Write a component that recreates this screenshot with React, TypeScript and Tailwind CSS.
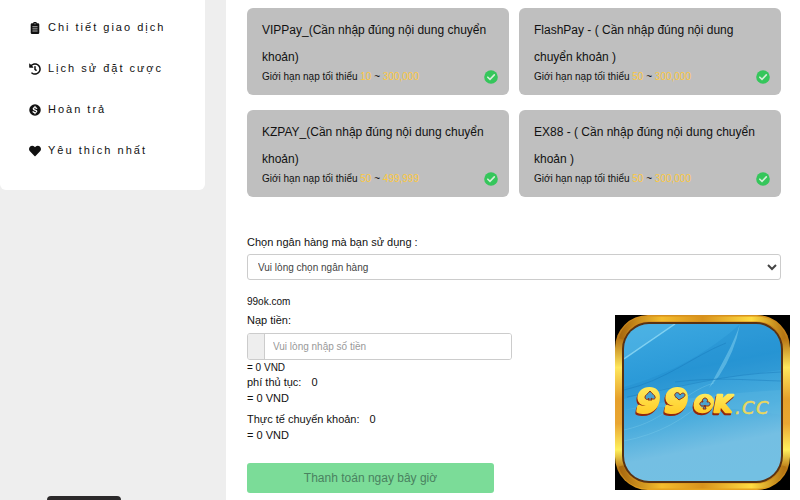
import React, { useState } from "react";
import { FaHistory, FaHeart } from "react-icons/fa";

const ClipboardIcon = () => (
  <svg viewBox="0 0 24 28" className="h-3 w-3" aria-hidden="true">
    <path
      fill="#111"
      d="M5 3h3a4 4 0 0 1 8 0h3a3 3 0 0 1 3 3v19a3 3 0 0 1-3 3H5a3 3 0 0 1-3-3V6a3 3 0 0 1 3-3Z"
    />
    <path stroke="#ddd" strokeWidth="1.8" d="M6 11h12M6 16h12M6 21h12" />
    <circle cx="12" cy="4" r="1.3" fill="#fff" />
  </svg>
);

const DollarIcon = () => (
  <svg viewBox="0 0 24 24" className="h-3 w-3" aria-hidden="true">
    <circle cx="12" cy="12" r="11.5" fill="#111" />
    <path
      fill="none"
      stroke="#fff"
      strokeWidth="2.4"
      strokeLinecap="round"
      d="M15.5 8.6c-1-1-2.2-1.4-3.7-1.4-2 0-3.4.9-3.4 2.4 0 3.5 7.2 1.6 7.2 5 0 1.5-1.5 2.4-3.6 2.4-1.5 0-2.9-.5-3.9-1.5M12 4.8v2.4M12 17v2.4"
    />
  </svg>
);

const CheckIcon = () => (
  <svg viewBox="0 0 14 14" className="h-3.5 w-3.5 shrink-0" aria-hidden="true">
    <circle cx="7" cy="7" r="6.8" fill="#35c65b" />
    <path
      d="m3.8 7.2 2.2 2.2 4.3-4.5"
      fill="none"
      stroke="#d4efd9"
      strokeWidth="1.6"
      strokeLinecap="round"
    />
  </svg>
);

const menu = [
  { label: "Chi tiết giao dịch", icon: <ClipboardIcon /> },
  { label: "Lịch sử đặt cược", icon: <FaHistory size={12} /> },
  { label: "Hoàn trả", icon: <DollarIcon /> },
  { label: "Yêu thích nhất", icon: <FaHeart size={12} /> },
];

const channels = [
  { name: "VIPPay_(Cần nhập đúng nội dung chuyển khoản)", min: "10", max: "300,000" },
  { name: "FlashPay - ( Cần nhập đúng nội dung chuyển khoản )", min: "50", max: "300,000" },
  { name: "KZPAY_(Cần nhập đúng nội dung chuyển khoản)", min: "50", max: "499,999" },
  { name: "EX88 - ( Cần nhập đúng nội dung chuyển khoản )", min: "50", max: "300,000" },
];

function Logo() {
  return (
    <svg viewBox="0 0 175 175" className="block h-[175px] w-[175px]" role="img" aria-label="99OK.cc">
      <defs>
        <linearGradient id="rim" x1="0" y1="0" x2="0" y2="1">
          <stop offset="0" stopColor="#d8911d" />
          <stop offset=".14" stopColor="#b97816" />
          <stop offset=".3" stopColor="#ffe75c" />
          <stop offset=".48" stopColor="#e6a02b" />
          <stop offset=".62" stopColor="#e9a632" />
          <stop offset=".77" stopColor="#fff05c" />
          <stop offset=".88" stopColor="#b77413" />
          <stop offset="1" stopColor="#e5a420" />
        </linearGradient>
        <linearGradient id="rimTop" x1="0" y1="0" x2="1" y2="0">
          <stop offset="0" stopColor="#a96a10" />
          <stop offset=".25" stopColor="#f4bd2d" />
          <stop offset=".5" stopColor="#d8921c" />
          <stop offset=".8" stopColor="#ffdc42" />
          <stop offset="1" stopColor="#b37413" />
        </linearGradient>
        <linearGradient id="sky" x1=".3" y1="0" x2=".5" y2="1">
          <stop offset="0" stopColor="#3aa6df" />
          <stop offset=".3" stopColor="#2b9ad8" />
          <stop offset=".6" stopColor="#4caddd" />
          <stop offset=".8" stopColor="#74bfe3" />
          <stop offset="1" stopColor="#73c0e3" />
        </linearGradient>
        <linearGradient id="gold" x1="0" y1="0" x2="0" y2="1">
          <stop offset="0" stopColor="#ffef64" />
          <stop offset="1" stopColor="#ffc61d" />
        </linearGradient>
        <clipPath id="face">
          <rect x="9" y="9" width="157" height="157" rx="25" />
        </clipPath>
      </defs>
      <rect width="175" height="175" fill="#000" />
      <rect width="175" height="175" rx="33" fill="url(#rim)" />
      <path
        d="M6 24Q12 4 34 4H141Q163 4 169 24M6 151Q12 171 34 171H141Q163 171 169 151"
        fill="none"
        stroke="url(#rimTop)"
        strokeWidth="5"
      />
      <rect x="7" y="7" width="161" height="161" rx="27" fill="#5a3212" />
      <rect x="9" y="9" width="157" height="157" rx="25" fill="url(#sky)" />
      <g clipPath="url(#face)" fill="none">
        <path d="M9 9H60L9 44Z" fill="#72c9ed" opacity=".3" />
        <path d="M9 44 60 9" stroke="#9be1f8" strokeWidth="1.5" opacity=".7" />
        <path d="M9 72C55 60 98 34 125 9H166V55C130 60 70 66 9 84Z" fill="#147fc2" opacity=".2" />
        <path d="M125 9C118 30 107 48 94 73L104 61Q120 37 125 9Z" fill="#9be1f8" opacity=".4" />
        <path
          d="M9 75C50 66 80 40 111 28M12 82C65 72 111 59 166 57M60 67C100 62 130 65 166 66"
          stroke="#1676b6"
          opacity=".4"
        />
        <path d="M9 115C55 105 65 78 99 68M9 126Q60 116 92 82" stroke="#89d4ef" opacity=".3" />
        <path d="M9 95Q80 86 166 100V75Q75 80 9 95Z" fill="#63bce6" opacity=".3" />
      </g>
      <g
        className="[filter:drop-shadow(-1px_2px_0_#92270d)]"
        fill="url(#gold)"
        stroke="url(#gold)"
        strokeLinejoin="round"
        fontFamily="'DejaVu Sans', sans-serif"
        fontWeight="bold"
        fontStyle="italic"
      >
        <text x="22 50" y="97" fontSize="32" strokeWidth="4">
          99
        </text>
        <text x="79 99" y="97" fontSize="23" strokeWidth="2.5">
          OK
        </text>
      </g>
      <g fill="#4aa3cf" stroke="#8c2c10">
        <path d="M35 76c-2 3-5 4-5 6 0 3 3 3 4 1l-1 2h4l-1-2c2 2 5 1 4-1 0-2-3-3-5-6Z" />
        <path d="M64 85c-3-3-5-4-4-6 1-2 4-2 5 1 2-3 5-2 5 0 0 2-3 3-6 5Z" />
        <path d="M88 87a2.5 2.5 0 1 1 4 0c4-1 4 4 1 4h-6c-3 0-3-5 1-4ZM90 90l1 4h-3Z" />
      </g>
      <text
        x="120 127 141"
        y="99"
        fill="#ead75e"
        stroke="#ead75e"
        strokeWidth=".5"
        fontFamily="'DejaVu Sans', sans-serif"
        fontStyle="italic"
        fontSize="18"
      >
        .CC
      </text>
    </svg>
  );
}

export default function App() {
  const [bank, setBank] = useState("");
  const [amount, setAmount] = useState("");

  return (
    <div className="relative flex min-h-screen overflow-hidden bg-white font-['Liberation_Sans',Arial,sans-serif] text-[11px] text-[#111]">
      <aside className="relative w-[226px] shrink-0 bg-[#eeeeee]">
        <nav className="mr-[21px] rounded-b-md bg-white pt-[7px] pb-[19px]">
          <ul>
            {menu.map((item) => (
              <li key={item.label}>
                <a href="#" className="flex h-[41px] items-center gap-[7px] pl-[29px] tracking-[2px]">
                  {item.icon}
                  {item.label}
                </a>
              </li>
            ))}
          </ul>
        </nav>
        <div className="absolute bottom-0 left-[47px] h-1 w-[74px] rounded-t bg-[#2b292a]" />
      </aside>

      <main className="min-w-0 flex-1 pt-2 pr-[19px] pl-[21px]">
        <div className="grid grid-cols-2 gap-x-2.5 gap-y-[15px]">
          {channels.map((c) => (
            <button
              type="button"
              key={c.name}
              className="flex flex-col rounded-md bg-[#bfbfbf] pt-[9px] pr-[11px] pb-3 pl-[15px] text-left"
            >
              <span className="text-xs leading-[27px]">{c.name}</span>
              <span className="flex h-3 w-full items-center justify-between text-[10px] leading-[14px]">
                <span>
                  Giới hạn nạp tối thiểu <span className="text-[#fcc93f]">{c.min}</span> ~{" "}
                  <span className="text-[#fcc93f]">{c.max}</span>
                </span>
                <CheckIcon />
              </span>
            </button>
          ))}
        </div>

        <form onSubmit={(e) => e.preventDefault()}>
          <label htmlFor="bank" className="mt-[37px] block leading-4">
            Chọn ngân hàng mà bạn sử dụng :
          </label>
          <select
            id="bank"
            value={bank}
            onChange={(e) => setBank(e.target.value)}
            className="mt-1 block h-[26px] w-full rounded-[3px] border border-[#cccccc] bg-white px-1.5 text-[10px] text-[#444]"
          >
            <option value="">Vui lòng chọn ngân hàng</option>
          </select>
          <p className="mt-4 text-[10px] leading-3">99ok.com</p>
          <label htmlFor="amount" className="mt-1 block leading-4">
            Nạp tiền:
          </label>
          <div className="mt-[5px] flex h-[27px] w-[265px] max-w-full overflow-hidden rounded-[3px] border border-[#cccccc]">
            <span className="w-[17px] shrink-0 border-r border-[#cccccc] bg-[#eeeeee]" />
            <input
              id="amount"
              value={amount}
              onChange={(e) => setAmount(e.target.value)}
              placeholder="Vui lòng nhập số tiền"
              className="min-w-0 flex-1 bg-white px-2 text-[10px] outline-none placeholder:text-[#999]"
            />
          </div>
          <p className="mt-0.5 text-[10px] leading-3">= 0 VND</p>
          <p className="leading-4">
            phí thủ tục:<span className="ml-2.5">0</span>
          </p>
          <p className="leading-4">= 0 VND</p>
          <p className="mt-[5px] leading-4">
            Thực tế chuyển khoản:<span className="ml-2.5">0</span>
          </p>
          <p className="leading-4">= 0 VND</p>
          <button
            type="submit"
            className="mt-5 mb-[7px] block h-[30px] w-[247px] max-w-full rounded-[3px] bg-[#7bdc98] text-xs text-[#4a8260]"
          >
            Thanh toán ngay bây giờ
          </button>
        </form>
      </main>

      <div className="absolute right-2.5 bottom-2.5">
        <Logo />
      </div>
    </div>
  );
}
